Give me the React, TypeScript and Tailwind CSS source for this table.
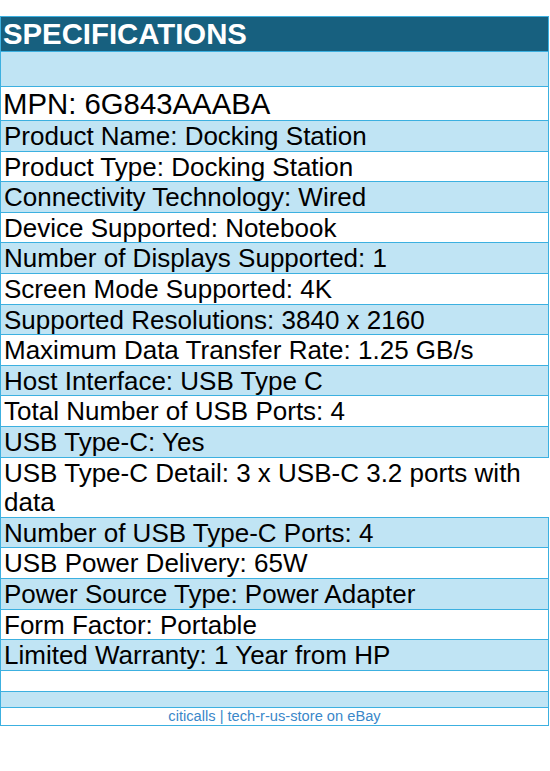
const ROWS = [
  "Product Name: Docking Station",
  "Product Type: Docking Station",
  "Connectivity Technology: Wired",
  "Device Supported: Notebook",
  "Number of Displays Supported: 1",
  "Screen Mode Supported: 4K",
  "Supported Resolutions: 3840 x 2160",
  "Maximum Data Transfer Rate: 1.25 GB/s",
  "Host Interface: USB Type C",
  "Total Number of USB Ports: 4",
  "USB Type-C: Yes",
  "USB Type-C Detail: 3 x USB-C 3.2 ports with data",
  "Number of USB Type-C Ports: 4",
  "USB Power Delivery: 65W",
  "Power Source Type: Power Adapter",
  "Form Factor: Portable",
  "Limited Warranty: 1 Year from HP",
];

export default function App() {
  return (
    <div className="bg-white min-h-screen pt-[16px] font-['Liberation_Sans',Arial,sans-serif] text-black">
      <div className="w-[549px] border-l border-t border-b border-[#3cb0e0]">
        <div className="bg-[#17607f] border-r border-[#3cb0e0] text-white font-bold text-[29.33px] leading-[34px] px-[2px]">
          SPECIFICATIONS
        </div>
        <div className="bg-[#c0e4f4] border-t border-r border-[#3cb0e0] h-[35px]" />
        <div className="border-t border-r border-[#3cb0e0] text-[29.33px] leading-[33px] px-[2px]">
          MPN: 6G843AAABA
        </div>
        {ROWS.map((r, i) => (
          <div
            key={r}
            className={`border-t border-[#3cb0e0] text-[26px] pt-[1px] pl-[3px] pr-[2px] ${
              i % 2 === 0 ? "bg-[#c0e4f4]" : "bg-white"
            } ${r.length > 40 ? "leading-[29.1px]" : "border-r leading-[28.6px]"}`}
          >
            {r}
          </div>
        ))}
        <div className="border-t border-r border-[#3cb0e0] h-[21px]" />
        <div className="bg-[#c0e4f4] border-t border-r border-[#3cb0e0] h-[16px]" />
        <div className="border-t border-r border-[#3cb0e0] text-center text-[#3a87c9] text-[14.67px] leading-[17px]">
          citicalls | tech-r-us-store on eBay
        </div>
      </div>
    </div>
  );
}
